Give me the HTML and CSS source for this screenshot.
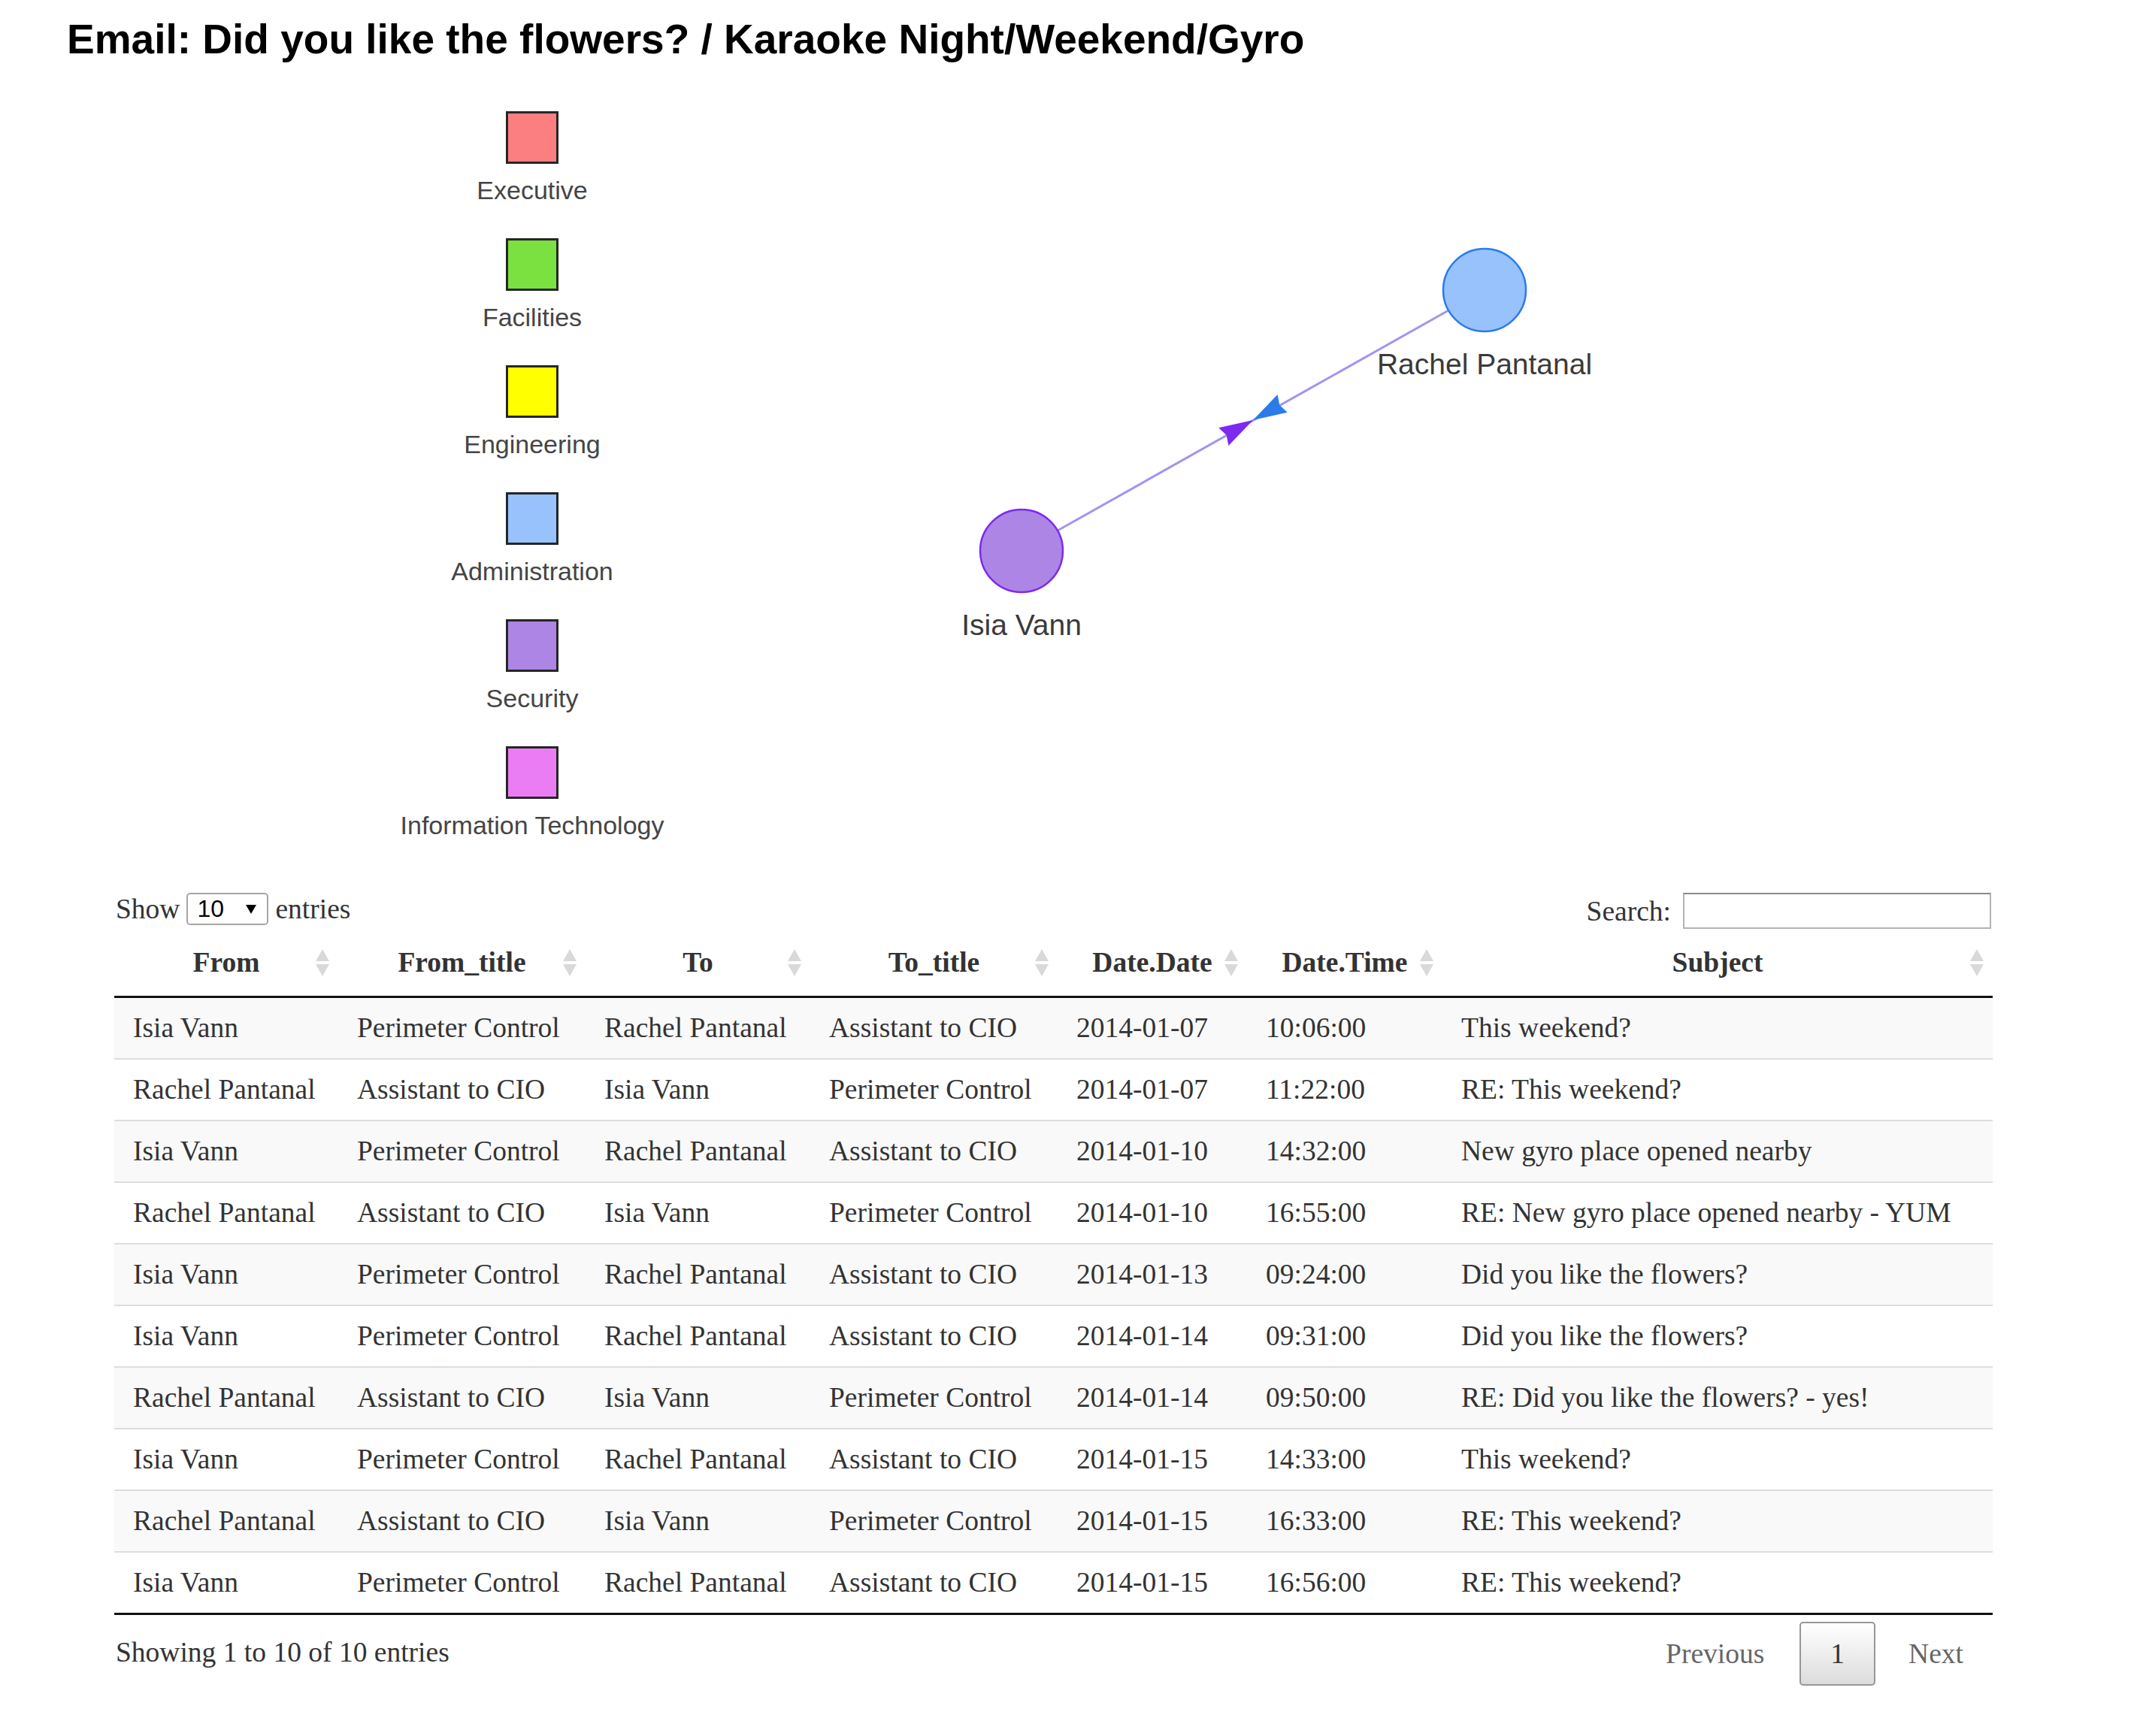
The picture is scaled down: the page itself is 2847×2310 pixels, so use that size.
FILE: index.html
```html
<!DOCTYPE html>
<html lang="en">
<head>
<meta charset="utf-8">
<title>Email: Did you like the flowers? / Karaoke Night/Weekend/Gyro</title>
<link rel="stylesheet" href="styles.css">
</head>
<body>
<h1 class="title">Email: Did you like the flowers? / Karaoke Night/Weekend/Gyro</h1>

<div class="viz">
  <div class="legend">
    <div class="legend-item"><span class="swatch swatch-exec"></span><span class="legend-label">Executive</span></div>
    <div class="legend-item"><span class="swatch swatch-fac"></span><span class="legend-label">Facilities</span></div>
    <div class="legend-item"><span class="swatch swatch-eng"></span><span class="legend-label">Engineering</span></div>
    <div class="legend-item"><span class="swatch swatch-adm"></span><span class="legend-label">Administration</span></div>
    <div class="legend-item"><span class="swatch swatch-sec"></span><span class="legend-label">Security</span></div>
    <div class="legend-item"><span class="swatch swatch-it"></span><span class="legend-label">Information Technology</span></div>
  </div>
  <svg class="network" width="1500" height="969" viewBox="0 0 1500 969" xmlns="http://www.w3.org/2000/svg">
    <line x1="499.8" y1="557.5" x2="1018.2" y2="265.5" stroke="#a293f4" stroke-width="3" stroke-linecap="round"/>
    <polygon points="759,411 726.4,444.9 723.7,430.9 713.2,421.3" fill="#7C29F0"/>
    <polygon points="759,411 804.8,400.7 794.3,391.1 791.6,377.1" fill="#2B7CE9"/>
    <circle cx="1067" cy="238" r="55" fill="#97C2FC" stroke="#2B7CE9" stroke-width="2.5"/>
    <circle cx="451" cy="585" r="55" fill="#AD85E4" stroke="#7C29F0" stroke-width="2.5"/>
    <text class="node-label" x="1067" y="350" text-anchor="middle">Rachel Pantanal</text>
    <text class="node-label" x="451" y="697" text-anchor="middle">Isia Vann</text>
  </svg>
</div>

<div class="dt-wrapper">
  <div class="dt-controls">
    <div class="dt-length">
      <span>Show</span>
      <span class="dt-select"><span class="dt-select-value">10</span><svg class="dt-select-arrow" width="14" height="12" viewBox="0 0 14 12"><polygon points="0,0 14,0 7,12" fill="#000"/></svg></span>
      <span>entries</span>
    </div>
    <div class="dt-filter">
      <span>Search:</span>
      <span class="dt-input"></span>
    </div>
  </div>

  <table class="dt">
    <colgroup>
      <col class="c-from"><col class="c-fromtitle"><col class="c-to"><col class="c-totitle"><col class="c-date"><col class="c-time"><col class="c-subject">
    </colgroup>
    <thead>
      <tr>
        <th>From<svg class="sort" width="20" height="36" viewBox="0 0 20 36"><polygon points="10,0 19,16 1,16" /><polygon points="1,20 19,20 10,36" /></svg></th>
        <th>From_title<svg class="sort" width="20" height="36" viewBox="0 0 20 36"><polygon points="10,0 19,16 1,16" /><polygon points="1,20 19,20 10,36" /></svg></th>
        <th>To<svg class="sort" width="20" height="36" viewBox="0 0 20 36"><polygon points="10,0 19,16 1,16" /><polygon points="1,20 19,20 10,36" /></svg></th>
        <th>To_title<svg class="sort" width="20" height="36" viewBox="0 0 20 36"><polygon points="10,0 19,16 1,16" /><polygon points="1,20 19,20 10,36" /></svg></th>
        <th>Date.Date<svg class="sort" width="20" height="36" viewBox="0 0 20 36"><polygon points="10,0 19,16 1,16" /><polygon points="1,20 19,20 10,36" /></svg></th>
        <th>Date.Time<svg class="sort" width="20" height="36" viewBox="0 0 20 36"><polygon points="10,0 19,16 1,16" /><polygon points="1,20 19,20 10,36" /></svg></th>
        <th>Subject<svg class="sort" width="20" height="36" viewBox="0 0 20 36"><polygon points="10,0 19,16 1,16" /><polygon points="1,20 19,20 10,36" /></svg></th>
      </tr>
    </thead>
    <tbody>
      <tr><td>Isia Vann</td><td>Perimeter Control</td><td>Rachel Pantanal</td><td>Assistant to CIO</td><td>2014-01-07</td><td>10:06:00</td><td>This weekend?</td></tr>
      <tr><td>Rachel Pantanal</td><td>Assistant to CIO</td><td>Isia Vann</td><td>Perimeter Control</td><td>2014-01-07</td><td>11:22:00</td><td>RE: This weekend?</td></tr>
      <tr><td>Isia Vann</td><td>Perimeter Control</td><td>Rachel Pantanal</td><td>Assistant to CIO</td><td>2014-01-10</td><td>14:32:00</td><td>New gyro place opened nearby</td></tr>
      <tr><td>Rachel Pantanal</td><td>Assistant to CIO</td><td>Isia Vann</td><td>Perimeter Control</td><td>2014-01-10</td><td>16:55:00</td><td>RE: New gyro place opened nearby - YUM</td></tr>
      <tr><td>Isia Vann</td><td>Perimeter Control</td><td>Rachel Pantanal</td><td>Assistant to CIO</td><td>2014-01-13</td><td>09:24:00</td><td>Did you like the flowers?</td></tr>
      <tr><td>Isia Vann</td><td>Perimeter Control</td><td>Rachel Pantanal</td><td>Assistant to CIO</td><td>2014-01-14</td><td>09:31:00</td><td>Did you like the flowers?</td></tr>
      <tr><td>Rachel Pantanal</td><td>Assistant to CIO</td><td>Isia Vann</td><td>Perimeter Control</td><td>2014-01-14</td><td>09:50:00</td><td>RE: Did you like the flowers? - yes!</td></tr>
      <tr><td>Isia Vann</td><td>Perimeter Control</td><td>Rachel Pantanal</td><td>Assistant to CIO</td><td>2014-01-15</td><td>14:33:00</td><td>This weekend?</td></tr>
      <tr><td>Rachel Pantanal</td><td>Assistant to CIO</td><td>Isia Vann</td><td>Perimeter Control</td><td>2014-01-15</td><td>16:33:00</td><td>RE: This weekend?</td></tr>
      <tr><td>Isia Vann</td><td>Perimeter Control</td><td>Rachel Pantanal</td><td>Assistant to CIO</td><td>2014-01-15</td><td>16:56:00</td><td>RE: This weekend?</td></tr>
    </tbody>
  </table>

  <div class="dt-footer">
    <div class="dt-info">Showing 1 to 10 of 10 entries</div>
    <div class="dt-paginate">
      <span class="pg pg-disabled pg-prev">Previous</span><span class="pg pg-current">1</span><span class="pg pg-disabled">Next</span>
    </div>
  </div>
</div>
</body>
</html>
```

FILE: styles.css
```css
html, body {
  margin: 0;
  padding: 0;
  background: #ffffff;
}

body {
  width: 2847px;
  min-height: 2310px;
  font-family: "Liberation Serif", "Times New Roman", serif;
  color: #333333;
}

.title {
  margin: 0;
  padding: 21px 0 0 89px;
  font-family: "Liberation Sans", Arial, sans-serif;
  font-weight: 700;
  font-size: 55px;
  line-height: 63px;
  color: #000000;
}

/* ---------- network + legend ---------- */
.viz {
  display: flex;
  align-items: flex-start;
  margin-top: 64px;
}

.legend {
  display: flex;
  flex-direction: column;
  align-items: center;
  gap: 45px;
  width: 400px;
  margin-left: 508px;
}

.legend-item {
  display: flex;
  flex-direction: column;
  align-items: center;
}

.swatch {
  display: block;
  width: 70px;
  height: 70px;
  box-sizing: border-box;
  border: 3px solid #262626;
}

.swatch-exec { background: #FB7E81; }
.swatch-fac  { background: #7BE141; }
.swatch-eng  { background: #FFFF00; }
.swatch-adm  { background: #97C2FC; }
.swatch-sec  { background: #AD85E4; }
.swatch-it   { background: #EB7DF4; }

.legend-label {
  display: block;
  margin-top: 16px;
  font-family: "Liberation Sans", Arial, sans-serif;
  font-size: 34px;
  line-height: 38px;
  color: #454545;
  white-space: nowrap;
}

.network {
  display: block;
  flex: none;
}

.node-label {
  font-family: "Liberation Sans", Arial, sans-serif;
  font-size: 39px;
  fill: #3a3a3a;
}

/* ---------- datatable ---------- */
.dt-wrapper {
  margin: 71px 0 0 152px;
  width: 2499px;
  font-size: 37.5px;
  color: #333333;
}

.dt-controls {
  display: flex;
  justify-content: space-between;
  align-items: flex-start;
  height: 48px;
}

.dt-length {
  display: flex;
  align-items: center;
  gap: 9px;
  height: 43px;
  line-height: 43px;
  margin-left: 2px;
}

.dt-select {
  display: flex;
  align-items: center;
  justify-content: space-between;
  box-sizing: border-box;
  width: 109px;
  height: 43px;
  padding: 0 14px 0 12px;
  border: 2px solid #a6a6a6;
  border-radius: 5px;
  background: #ffffff;
  font-family: "Liberation Sans", Arial, sans-serif;
  font-size: 32px;
  color: #000000;
}

.dt-select-arrow {
  display: block;
}

.dt-filter {
  display: flex;
  align-items: center;
  gap: 16px;
  height: 48px;
  line-height: 43px;
}

.dt-input {
  display: block;
  box-sizing: border-box;
  width: 410px;
  height: 48px;
  margin-right: 2px;
  border: 2px solid #b4b4b4;
  border-top-color: #8a8a8a;
  background: #ffffff;
}

.dt {
  width: 2499px;
  table-layout: fixed;
  border-collapse: separate;
  border-spacing: 0;
  border-bottom: 3px solid #111111;
}

.c-from      { width: 298px; }
.c-fromtitle { width: 329px; }
.c-to        { width: 299px; }
.c-totitle   { width: 329px; }
.c-date      { width: 252px; }
.c-time      { width: 260px; }
.c-subject   { width: 732px; }

.dt th {
  position: relative;
  padding: 23px 25px;
  line-height: 43px;
  font-weight: 700;
  text-align: center;
  color: #333333;
  border-bottom: 3px solid #111111;
  white-space: nowrap;
}

.sort {
  position: absolute;
  right: 11px;
  top: 50%;
  transform: translateY(-50%);
  fill: #d9d9d9;
}

.dt td {
  padding: 19px 25px;
  line-height: 42px;
  text-align: left;
  white-space: nowrap;
  border-top: 2px solid #dddddd;
}

.dt tbody tr:first-child td {
  border-top: none;
}

.dt tbody tr:nth-child(odd) {
  background: #f9f9f9;
}

.dt-footer {
  display: flex;
  justify-content: space-between;
  align-items: flex-start;
}

.dt-info {
  padding-top: 28px;
  line-height: 43px;
  margin-left: 2px;
}

.dt-paginate {
  display: flex;
  padding-top: 9px;
}

.pg {
  display: block;
  box-sizing: border-box;
  min-width: 56px;
  padding: 19px 37px;
  margin-left: 5px;
  line-height: 43px;
  text-align: center;
  border: 2px solid transparent;
  border-radius: 5px;
}

.pg-prev {
  padding-right: 40px;
}

.pg-disabled {
  color: #666666;
}

.pg-current {
  padding: 19px 39px;
  color: #333333;
  border-color: #979797;
  background: linear-gradient(to bottom, #ffffff 0%, #dcdcdc 100%);
}
```
